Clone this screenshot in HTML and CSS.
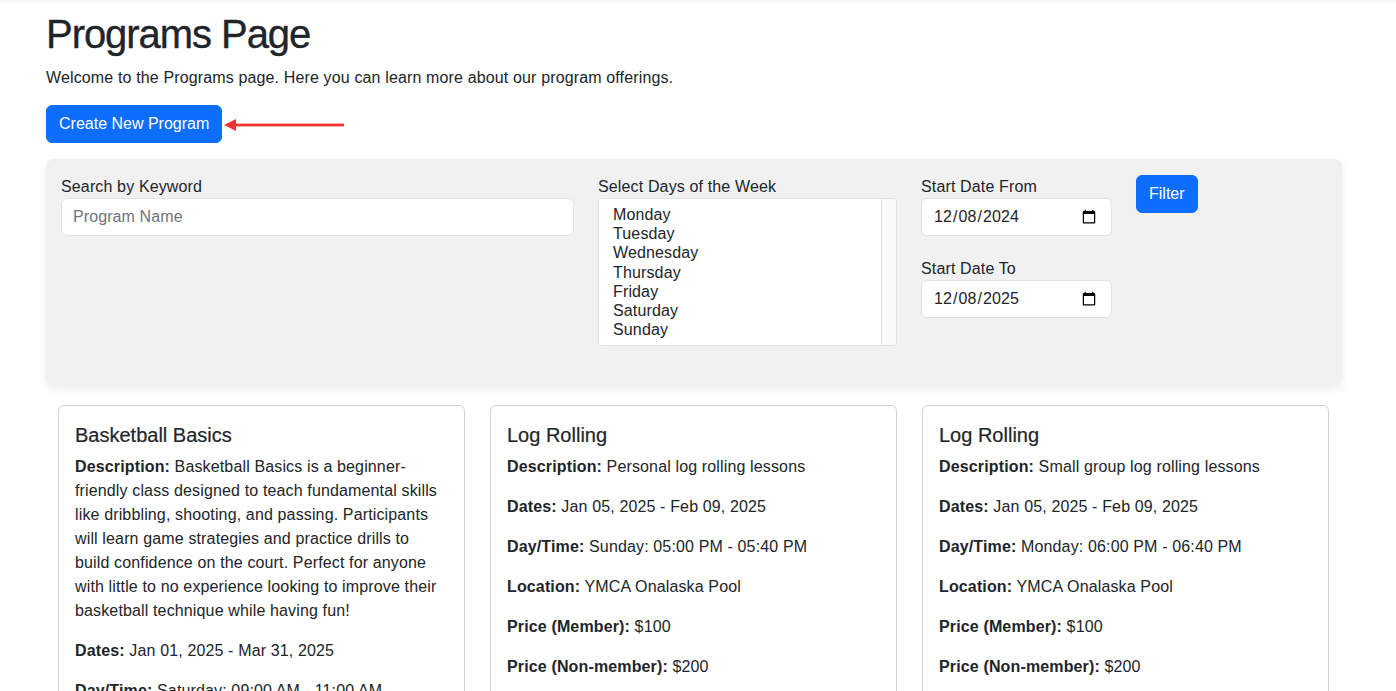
FILE: index.html
```html
<!DOCTYPE html>
<html lang="en">
<head>
<meta charset="utf-8">
<title>Programs Page</title>
<link rel="stylesheet" href="styles.css">
</head>
<body>
<div class="topbar"></div>
<main class="container">
  <h1 class="title">Programs Page</h1>
  <p class="lead-text">Welcome to the Programs page. Here you can learn more about our program offerings.</p>
  <div class="create-row">
    <button class="btn">Create New Program</button>
    <svg class="arrow" width="122" height="14" viewBox="0 0 122 14">
      <polygon points="1,7 13,1 13,13" fill="#f03434"/>
      <rect x="11" y="5.6" width="110" height="2.8" fill="#f03434"/>
    </svg>
  </div>

  <section class="filter-panel">
    <div class="col col-search">
      <label class="label">Search by Keyword</label>
      <input class="input" type="text" placeholder="Program Name">
    </div>
    <div class="col col-days">
      <label class="label">Select Days of the Week</label>
      <div class="listbox">
        <ul class="options">
          <li>Monday</li>
          <li>Tuesday</li>
          <li>Wednesday</li>
          <li>Thursday</li>
          <li>Friday</li>
          <li>Saturday</li>
          <li>Sunday</li>
        </ul>
        <div class="track"></div>
      </div>
    </div>
    <div class="col col-dates">
      <label class="label">Start Date From</label>
      <input class="input date" type="date" value="2024-12-08">
      <label class="label label-gap">Start Date To</label>
      <input class="input date" type="date" value="2025-12-08">
    </div>
    <div class="col col-btn">
      <button class="btn btn-filter">Filter</button>
    </div>
  </section>

  <section class="cards">
    <article class="card">
      <h5 class="card-title">Basketball Basics</h5>
      <p><b>Description:</b> Basketball Basics is a beginner-friendly class designed to teach fundamental skills like dribbling, shooting, and passing. Participants will learn game strategies and practice drills to build confidence on the court. Perfect for anyone with little to no experience looking to improve their basketball technique while having fun!</p>
      <p><b>Dates:</b> Jan 01, 2025 - Mar 31, 2025</p>
      <p><b>Day/Time:</b> Saturday: 09:00 AM - 11:00 AM</p>
      <p><b>Location:</b> YMCA Onalaska Gym</p>
      <p><b>Price (Member):</b> $50</p>
    </article>
    <article class="card">
      <h5 class="card-title">Log Rolling</h5>
      <p><b>Description:</b> Personal log rolling lessons</p>
      <p><b>Dates:</b> Jan 05, 2025 - Feb 09, 2025</p>
      <p><b>Day/Time:</b> Sunday: 05:00 PM - 05:40 PM</p>
      <p><b>Location:</b> YMCA Onalaska Pool</p>
      <p><b>Price (Member):</b> $100</p>
      <p><b>Price (Non-member):</b> $200</p>
    </article>
    <article class="card">
      <h5 class="card-title">Log Rolling</h5>
      <p><b>Description:</b> Small group log rolling lessons</p>
      <p><b>Dates:</b> Jan 05, 2025 - Feb 09, 2025</p>
      <p><b>Day/Time:</b> Monday: 06:00 PM - 06:40 PM</p>
      <p><b>Location:</b> YMCA Onalaska Pool</p>
      <p><b>Price (Member):</b> $100</p>
      <p><b>Price (Non-member):</b> $200</p>
    </article>
  </section>
</main>
</body>
</html>
```
FILE: styles.css
```css
* { box-sizing: border-box; }
html, body { margin: 0; padding: 0; }
body {
  font-family: "Liberation Sans", Arial, sans-serif;
  font-size: 16px;
  line-height: 1.5;
  letter-spacing: 0.14px;
  color: #212529;
  background: #fff;
  overflow: hidden;
}
.topbar {
  height: 2px;
  background: #f7f7f7;
  box-shadow: 0 1px 2px rgba(0,0,0,0.03);
}
.container {
  padding: 7px 54px 0 46px;
}
.title {
  margin: 0 0 8px;
  font-size: 40px;
  font-weight: 500;
  line-height: 1.2;
  letter-spacing: -1.05px;
  padding-top: 1px;
  -webkit-text-stroke: 0.35px #212529;
}
.lead-text { margin: 0 0 15px; }
.create-row {
  display: flex;
  align-items: center;
  gap: 1px;
}
.btn {
  font-family: inherit;
  font-size: 16px;
  line-height: 24px;
  letter-spacing: 0;
  color: #fff;
  background: #0d6efd;
  border: 1px solid #0d6efd;
  border-radius: 6px;
  padding: 6px 12px;
}
.arrow { display: block; margin-top: 2px; }

.filter-panel {
  margin-top: 16px;
  background: #f1f1f1;
  border-radius: 8px;
  box-shadow: 0 4px 8px rgba(0,0,0,0.08);
  padding: 15px 15px 39px;
  display: flex;
  align-items: flex-start;
  gap: 24px;
  height: 226px;
}
.col { display: flex; flex-direction: column; }
.col-search { width: 513px; }
.col-days { width: 299px; }
.col-dates { width: 191px; }
.col-btn { padding-top: 1px; }
.label { display: block; line-height: 24px; padding-top: 1px; margin-bottom: -1px; }
.label-gap { margin-top: 20px; }
.input {
  height: 38px;
  font-family: inherit;
  font-size: 16px;
  letter-spacing: 0.1px;
  color: #212529;
  background: #fff;
  border: 1px solid #dee2e6;
  border-radius: 6px;
  padding: 6px 12px 6px 11px;
  width: 100%;
}
.input::placeholder { color: #6c757d; }
.listbox {
  height: 148px;
  background: #fff;
  border: 1px solid #dee2e6;
  border-radius: 4px;
  display: flex;
  overflow: hidden;
}
.options {
  flex: 1;
  list-style: none;
  margin: 0;
  padding: 6px 14px;
  line-height: 19.2px;
}
.track {
  width: 15px;
  background: #fafafa;
  border-left: 1px solid #e6e6e6;
}
.btn-filter { padding: 6px 12px; }

.cards {
  display: flex;
  gap: 25px;
  padding: 20px 12px 0 12px;
  align-items: flex-start;
}
.card {
  width: 407px;
  flex: 0 0 407px;
  border: 1px solid rgba(0,0,0,0.175);
  border-radius: 6px;
  padding: 16px 16px 16px 16px;
  min-height: 400px;
}
.card-title {
  margin: 0 0 8px;
  padding-top: 1px;
  font-size: 20px;
  font-weight: 500;
  line-height: 1.2;
  letter-spacing: 0;
  -webkit-text-stroke: 0.2px #212529;
}
.card p { margin: 0 0 16px; }
.card b { font-weight: 700; }
```
